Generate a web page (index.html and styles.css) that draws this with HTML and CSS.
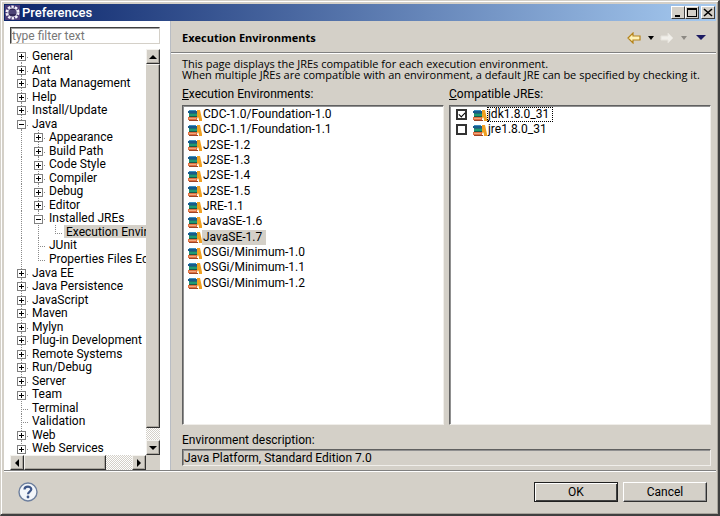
FILE: index.html
```html
<!DOCTYPE html>
<html lang="en">
<head>
<meta charset="utf-8">
<title>Preferences</title>
<link rel="stylesheet" href="styles.css">
</head>
<body>
<svg class="defs" aria-hidden="true">
  <symbol id="library" viewBox="0 0 14 12">
    <path d="M1 1h7v1H1z" fill="#3d8fc0"/><path d="M0 2h9v2H0z" fill="#185a8c"/>
    <path d="M1 4h8v1H1z" fill="#1f6f74"/><path d="M1 5h8v2H1z" fill="#1f9a72"/><path d="M1 7h8v1H1z" fill="#1c5a48"/>
    <path d="M0 8h9v3H0z" fill="#e0703f"/><path d="M1 9h7v1H1z" fill="#f0a880"/><path d="M1 11h9v1H1z" fill="#9c4326"/>
    <path d="M9 1h3l2 9v2h-3l-1-4-1 2z" fill="#f0a020"/><path d="M10 8l1 3h-1z" fill="#fff"/>
  </symbol>
</svg>
<div class="window">
  <header class="titlebar">
    <svg class="app-icon" viewBox="0 0 15 15" aria-hidden="true">
      <path d="M0 0h15v15H0z" fill="#4b3b78"/>
      <circle cx="7.500" cy="7.500" r="5.500" fill="none" stroke="#f4f2fa" stroke-width="3" stroke-dasharray="2.300 1.156"/>
      <circle cx="7.500" cy="7.500" r="5" fill="#d8d4e6"/>
      <circle cx="7.500" cy="7.500" r="4" fill="#2f2554"/>
      <path d="M4 6h7M4 8h7" stroke="#6a6096"/>
    </svg>
    <span class="title">Preferences</span>
    <button class="caption" type="button" aria-label="Minimize"><svg viewBox="0 0 10 9"><path d="M2 7h5v2H2z"/></svg></button>
    <button class="caption" type="button" aria-label="Maximize"><svg viewBox="0 0 10 9"><path d="M0 0h10v9H0zM1 2v6h8V2z" fill-rule="evenodd"/></svg></button>
    <button class="caption close" type="button" aria-label="Close"><svg viewBox="0 0 10 9"><path d="M1 1l8 7M9 1L1 8" stroke="#000" stroke-width="1.600"/></svg></button>
  </header>

  <main class="body">
    <nav class="sidebar">
      <input class="filter" type="text" placeholder="type filter text" aria-label="Filter">
      <div class="tree-frame">
        <ul class="tree">
          <li><span class="g first"><button type="button" class="tog plus" aria-label="Expand"></button></span><span class="name">General</span></li>
          <li><span class="g tee"><button type="button" class="tog plus" aria-label="Expand"></button></span><span class="name">Ant</span></li>
          <li><span class="g tee"><button type="button" class="tog plus" aria-label="Expand"></button></span><span class="name">Data Management</span></li>
          <li><span class="g tee"><button type="button" class="tog plus" aria-label="Expand"></button></span><span class="name">Help</span></li>
          <li><span class="g tee"><button type="button" class="tog plus" aria-label="Expand"></button></span><span class="name">Install/Update</span></li>
          <li><span class="g tee"><button type="button" class="tog" aria-label="Collapse"></button></span><span class="name">Java</span></li>
          <li><span class="g"></span><span class="g tee"><button type="button" class="tog plus" aria-label="Expand"></button></span><span class="name">Appearance</span></li>
          <li><span class="g"></span><span class="g tee"><button type="button" class="tog plus" aria-label="Expand"></button></span><span class="name">Build Path</span></li>
          <li><span class="g"></span><span class="g tee"><button type="button" class="tog plus" aria-label="Expand"></button></span><span class="name">Code Style</span></li>
          <li><span class="g"></span><span class="g tee"><button type="button" class="tog plus" aria-label="Expand"></button></span><span class="name">Compiler</span></li>
          <li><span class="g"></span><span class="g tee"><button type="button" class="tog plus" aria-label="Expand"></button></span><span class="name">Debug</span></li>
          <li><span class="g"></span><span class="g tee"><button type="button" class="tog plus" aria-label="Expand"></button></span><span class="name">Editor</span></li>
          <li><span class="g"></span><span class="g tee"><button type="button" class="tog" aria-label="Collapse"></button></span><span class="name">Installed JREs</span></li>
          <li><span class="g"></span><span class="g"></span><span class="g last"></span><span class="name selected">Execution Environments</span></li>
          <li><span class="g"></span><span class="g tee"></span><span class="name">JUnit</span></li>
          <li><span class="g"></span><span class="g last"></span><span class="name">Properties Files Editor</span></li>
          <li><span class="g tee"><button type="button" class="tog plus" aria-label="Expand"></button></span><span class="name">Java EE</span></li>
          <li><span class="g tee"><button type="button" class="tog plus" aria-label="Expand"></button></span><span class="name">Java Persistence</span></li>
          <li><span class="g tee"><button type="button" class="tog plus" aria-label="Expand"></button></span><span class="name">JavaScript</span></li>
          <li><span class="g tee"><button type="button" class="tog plus" aria-label="Expand"></button></span><span class="name">Maven</span></li>
          <li><span class="g tee"><button type="button" class="tog plus" aria-label="Expand"></button></span><span class="name">Mylyn</span></li>
          <li><span class="g tee"><button type="button" class="tog plus" aria-label="Expand"></button></span><span class="name">Plug-in Development</span></li>
          <li><span class="g tee"><button type="button" class="tog plus" aria-label="Expand"></button></span><span class="name">Remote Systems</span></li>
          <li><span class="g tee"><button type="button" class="tog plus" aria-label="Expand"></button></span><span class="name">Run/Debug</span></li>
          <li><span class="g tee"><button type="button" class="tog plus" aria-label="Expand"></button></span><span class="name">Server</span></li>
          <li><span class="g tee"><button type="button" class="tog plus" aria-label="Expand"></button></span><span class="name">Team</span></li>
          <li><span class="g tee"></span><span class="name">Terminal</span></li>
          <li><span class="g tee"></span><span class="name">Validation</span></li>
          <li><span class="g tee"><button type="button" class="tog plus" aria-label="Expand"></button></span><span class="name">Web</span></li>
          <li><span class="g tee"><button type="button" class="tog plus" aria-label="Expand"></button></span><span class="name">Web Services</span></li>
        </ul>
        <div class="vbar">
          <button type="button" class="arrow" aria-label="Scroll up"><svg viewBox="0 0 8 8"><path d="M4 2l4 4H0z"/></svg></button>
          <div class="thumb"></div>
          <div class="track"></div>
          <button type="button" class="arrow" aria-label="Scroll down"><svg viewBox="0 0 8 8"><path d="M0 2h8L4 6z"/></svg></button>
        </div>
        <div class="hbar">
          <button type="button" class="arrow" aria-label="Scroll left"><svg viewBox="0 0 8 8"><path d="M6 0v8L2 4z"/></svg></button>
          <div class="thumb"></div>
          <div class="track"></div>
          <button type="button" class="arrow" aria-label="Scroll right"><svg viewBox="0 0 8 8"><path d="M2 0l4 4-4 4z"/></svg></button>
        </div>
        <div class="corner"></div>
      </div>
    </nav>

    <section class="page">
      <div class="page-head">
        <h1>Execution Environments</h1>
        <button type="button" class="tool arrow-tool" aria-label="Back"><svg viewBox="0 0 14 12"><path d="M1 6l5-5v3h7v4H6v3z" fill="#fff3b8" stroke="#b5841c" stroke-width="1.200"/></svg></button>
        <button type="button" class="tool caret" aria-label="Back history"><svg viewBox="0 0 6 4"><path d="M0 0h6L3 4z"/></svg></button>
        <button type="button" class="tool arrow-tool" aria-label="Forward" disabled><svg viewBox="0 0 14 12"><path d="M13 6L8 1v3H1v4h7v3z" fill="#f1efea" stroke="#e6e3dc"/></svg></button>
        <button type="button" class="tool caret" aria-label="Forward history" disabled><svg viewBox="0 0 6 4"><path d="M0 0h6L3 4z" fill="#8c8983"/></svg></button>
        <button type="button" class="tool menu" aria-label="Menu"><svg viewBox="0 0 10 5"><path d="M0 0h10L5 5z" fill="#1c1a62"/></svg></button>
      </div>
      <div class="page-body">
        <p class="intro">This page displays the JREs compatible for each execution environment.<br>When multiple JREs are compatible with an environment, a default JRE can be specified by checking it.</p>
        <div class="columns">
          <div class="column">
            <h2 id="env"><u>E</u>xecution Environments:</h2>
            <ul class="list" aria-labelledby="env">
              <li><svg><use href="#library"/></svg><span>CDC-1.0/Foundation-1.0</span></li>
              <li><svg><use href="#library"/></svg><span>CDC-1.1/Foundation-1.1</span></li>
              <li><svg><use href="#library"/></svg><span>J2SE-1.2</span></li>
              <li><svg><use href="#library"/></svg><span>J2SE-1.3</span></li>
              <li><svg><use href="#library"/></svg><span>J2SE-1.4</span></li>
              <li><svg><use href="#library"/></svg><span>J2SE-1.5</span></li>
              <li><svg><use href="#library"/></svg><span>JRE-1.1</span></li>
              <li><svg><use href="#library"/></svg><span>JavaSE-1.6</span></li>
              <li><svg><use href="#library"/></svg><span class="selected">JavaSE-1.7</span></li>
              <li><svg><use href="#library"/></svg><span>OSGi/Minimum-1.0</span></li>
              <li><svg><use href="#library"/></svg><span>OSGi/Minimum-1.1</span></li>
              <li><svg><use href="#library"/></svg><span>OSGi/Minimum-1.2</span></li>
            </ul>
          </div>
          <div class="column">
            <h2 id="jre"><u>C</u>ompatible JREs:</h2>
            <ul class="list checks" aria-labelledby="jre">
              <li><input type="checkbox" id="jdk18" checked><label for="jdk18"><svg><use href="#library"/></svg><span class="focused">jdk1.8.0_31</span></label></li>
              <li><input type="checkbox" id="jre18"><label for="jre18"><svg><use href="#library"/></svg><span>jre1.8.0_31</span></label></li>
            </ul>
          </div>
        </div>
        <label class="desc-label" for="desc">Environment description:</label>
        <input class="desc" id="desc" type="text" readonly value="Java Platform, Standard Edition 7.0">
      </div>
    </section>
  </main>

  <footer class="footer">
    <button type="button" class="help" aria-label="Help"><svg viewBox="0 0 20 20"><circle cx="10" cy="10" r="9" fill="#f3f6fa" stroke="#6d7f9e" stroke-width="1.400"/><path d="M6.500 7.600C6.500 3.800 13.300 3.800 13.300 7.300C13.300 9.600 10 9.500 10 12.200" fill="none" stroke="#3d5688" stroke-width="2.200"/><circle cx="10" cy="15" r="1.400" fill="#3d5688"/></svg></button>
    <button type="button" class="btn default">OK</button>
    <button type="button" class="btn">Cancel</button>
  </footer>
</div>
</body>
</html>
```
FILE: styles.css
```css
* { box-sizing: border-box; }
:root {
  --face: #d4d0c8;
  --dots: repeating-linear-gradient(to bottom, #8a8a8a 0 1px, transparent 1px 2px);
}
body { margin: 0; font: 12px/14px Roboto, Arial, sans-serif; color: #000; }
button, input { font: inherit; color: inherit; margin: 0; padding: 0; border: 0; background: none; border-radius: 0; }
ul, h1, h2, p { margin: 0; padding: 0; list-style: none; font: inherit; }
.defs { position: absolute; width: 0; height: 0; }

.window {
  display: flex;
  flex-direction: column;
  height: 100vh;
  padding: 2px;
  background: var(--face);
  border: 1px solid var(--face);
  border-right: 2px solid #404040;
  border-bottom: 2px solid #404040;
  box-shadow: inset 1px 1px #fff, inset -1px -1px #a8a49c;
}
.titlebar {
  display: flex;
  align-items: center;
  height: 17px;
  margin: 1px 0 0 1px;
  padding-right: 1px;
  background: linear-gradient(to right, #0a246a, #a6caf0);
}
.app-icon { width: 15px; height: 15px; margin: 0 2px 0 1px; }
.title { flex: 1; color: #fff; font: 500 13px/16px Roboto, sans-serif; }
.caption {
  display: flex;
  align-items: center;
  justify-content: center;
  width: 14px;
  height: 13px;
  background: var(--face);
  border: 1px solid;
  border-color: #fff #404040 #404040 #fff;
}
.caption svg { width: 10px; height: 9px; }
.close { margin-left: 2px; }

.body { flex: 1; display: flex; min-height: 0; margin-left: 1px; border-bottom: 1px solid #808080; }
.sidebar {
  display: flex;
  flex-direction: column;
  width: 166px;
  padding: 6px 10px 0 6px;
  background: #fff;
}
.filter {
  width: 100%;
  height: 17px;
  margin-bottom: 5px;
  border: 1px solid;
  border-color: #404040 var(--face) var(--face) #404040;
  box-shadow: inset 1px 1px #a0a0a0;
  padding-left: 1px;
}
.filter::placeholder { color: #777; opacity: 1; }
.tree-frame {
  flex: 1;
  display: grid;
  grid-template: minmax(0, 1fr) 15px / minmax(0, 1fr) 14px;
  min-height: 0;
}
.tree { display: flex; flex-direction: column; padding-left: 3px; overflow: hidden; }
.tree li { flex: 1; display: flex; align-items: stretch; min-height: 0; white-space: nowrap; }
.name { padding: 0 2px; line-height: 14px; }
.selected { background: var(--face); }
.g {
  position: relative;
  flex: none;
  display: flex;
  align-items: center;
  width: 17px;
  padding: 2px 0 0 4px;
}
.g::before { content: ""; position: absolute; left: 8px; top: 0; bottom: 0; width: 1px; background: var(--dots); }
.g.first::before { top: 50%; }
.g.last::before { bottom: 50%; }
.tee::after, .first::after, .last::after {
  content: "";
  position: absolute;
  left: 8px;
  right: 1px;
  top: 8px;
  height: 1px;
  background: repeating-linear-gradient(to right, #8a8a8a 0 1px, transparent 1px 2px);
}
.tog {
  position: relative;
  z-index: 1;
  width: 9px;
  height: 9px;
  border: 1px solid #808080;
  background: linear-gradient(#000, #000) center / 5px 1px no-repeat, #fff;
}
.tog.plus {
  background: linear-gradient(#000, #000) center / 5px 1px no-repeat, linear-gradient(#000, #000) center / 1px 5px no-repeat, #fff;
}

.vbar, .hbar { display: flex; }
.vbar { flex-direction: column; }
.arrow, .thumb {
  background: var(--face);
  border: 1px solid;
  border-color: #f4f2ee #303030 #303030 #f4f2ee;
  box-shadow: inset -1px -1px #a8a49c;
}
.vbar .thumb { border-left-color: var(--face); }
.arrow { display: flex; align-items: center; justify-content: center; width: 14px; height: 15px; }
.arrow svg { width: 8px; height: 8px; }
.thumb { flex: 30; }
.track { flex: 1; background: repeating-conic-gradient(#fff 0 25%, var(--face) 0 50%) 0 0 / 2px 2px; }
.hbar .thumb { flex: 3; }
.corner { background: var(--face); }

.page { flex: 1; display: flex; flex-direction: column; min-width: 0; border-left: 1px solid #b9bdc4; }
.page-head {
  display: flex;
  align-items: center;
  height: 32px;
  padding: 2px 10px 0 11px;
  border-bottom: 1px solid #808080;
  box-shadow: 0 1px #fff;
}
h1 { flex: 1; font: bold 11px/16px "Open Sans", sans-serif; }
.tool { display: flex; }
.tool svg { display: block; width: 100%; }
.arrow-tool { width: 14px; }
.caret { width: 6px; margin: 0 6px 0 7px; }
.menu { width: 10px; margin-left: 3px; }
.page-body { flex: 1; display: flex; flex-direction: column; min-height: 0; padding: 5px 5px 4px 11px; }
.intro { font: 11px/11px "Open Sans", sans-serif; white-space: nowrap; }
.columns { flex: 1; display: flex; gap: 5px; min-height: 0; margin-top: 7px; }
.column { flex: 1; display: flex; flex-direction: column; min-width: 0; }
h2 { margin-bottom: 4px; line-height: 14px; }
.list {
  flex: 1;
  display: grid;
  grid-auto-rows: 15px 15px 16px;
  align-content: start;
  padding: 1px 0 0 5px;
  background: #fff;
  border: 1px solid;
  border-color: #606060 #f0eeea #f0eeea #606060;
  box-shadow: inset 1px 1px #909090;
}
.list li, .list label { display: flex; align-items: center; }
.list svg { width: 14px; height: 12px; }
.list span { padding: 0 4px 0 1px; line-height: 15px; }
.checks input {
  appearance: none;
  width: 11px;
  height: 11px;
  margin: 0 6px 0 1px;
  border: 2px solid #333;
  background: #fff;
}
.checks input:checked { display: grid; }
.checks input:checked::before { content: ""; width: 5px; height: 3px; margin: 1px; border: solid #000; border-width: 0 0 1px 1px; transform: rotate(-45deg); }
.focused { outline: 1px dotted #000; outline-offset: -1px; }
.desc-label { margin: 8px 0 2px; }
.desc {
  width: 100%;
  height: 17px;
  padding-left: 1px;
  border: 1px solid;
  border-color: #606060 #f0eeea #f0eeea #606060;
  box-shadow: inset 1px 1px #909090;
}

.footer {
  display: flex;
  align-items: center;
  gap: 5px;
  height: 41px;
  margin-left: 1px;
  padding: 0 9px 0 14px;
  border-top: 1px solid #fff;
}
.help { width: 20px; height: 20px; margin-right: auto; }
.help svg { display: block; }
.btn {
  width: 84px;
  height: 20px;
  border: 1px solid;
  border-color: #fff #303030 #303030 #fff;
  box-shadow: inset -1px -1px #909090;
}
.default { border-color: #202020; box-shadow: inset 1px 1px #fff, inset -1px -1px #404040; }
```
